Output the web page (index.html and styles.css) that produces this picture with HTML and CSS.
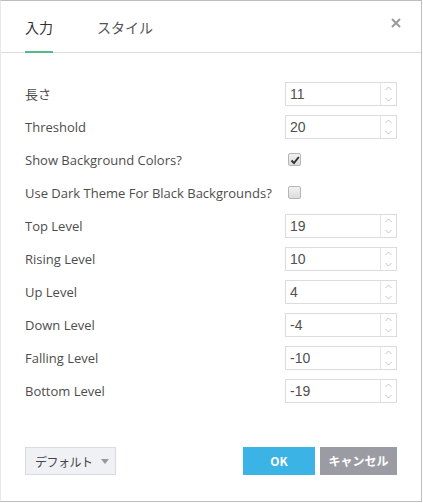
FILE: index.html
```html
<!DOCTYPE html>
<html lang="ja">
<head>
<meta charset="utf-8">
<link rel="stylesheet" href="styles.css">
</head>
<body>
<div class="dialog">
  <div class="header">
    <div class="tab active">入力</div>
    <div class="tab">スタイル</div>
    <div class="close">
      <svg width="10" height="10" viewBox="0 0 10 10"><path d="M1 1L9 9M9 1L1 9" stroke="#9a9a9a" stroke-width="2"/></svg>
    </div>
  </div>
  <div class="content">
    <div class="row"><span class="label">長さ</span><div class="spin"><span class="val">11</span><div class="arrows"><svg width="15" height="22" viewBox="0 0 15 22"><path d="M4.5 7L7.5 4L10.5 7" /><path d="M4.5 15L7.5 18L10.5 15" /></svg></div></div></div>
    <div class="row"><span class="label">Threshold</span><div class="spin"><span class="val">20</span><div class="arrows"><svg width="15" height="22" viewBox="0 0 15 22"><path d="M4.5 7L7.5 4L10.5 7" /><path d="M4.5 15L7.5 18L10.5 15" /></svg></div></div></div>
    <div class="row"><span class="label check-label">Show Background Colors?</span><span class="checkbox checked"><svg width="10" height="10" viewBox="0 0 10 10"><path d="M1.5 5.5L4 8L8.8 2" fill="none" stroke="#333" stroke-width="2"/></svg></span></div>
    <div class="row"><span class="label check-label">Use Dark Theme For Black Backgrounds?</span><span class="checkbox"></span></div>
    <div class="row"><span class="label">Top Level</span><div class="spin"><span class="val">19</span><div class="arrows"><svg width="15" height="22" viewBox="0 0 15 22"><path d="M4.5 7L7.5 4L10.5 7" /><path d="M4.5 15L7.5 18L10.5 15" /></svg></div></div></div>
    <div class="row"><span class="label">Rising Level</span><div class="spin"><span class="val">10</span><div class="arrows"><svg width="15" height="22" viewBox="0 0 15 22"><path d="M4.5 7L7.5 4L10.5 7" /><path d="M4.5 15L7.5 18L10.5 15" /></svg></div></div></div>
    <div class="row"><span class="label">Up Level</span><div class="spin"><span class="val">4</span><div class="arrows"><svg width="15" height="22" viewBox="0 0 15 22"><path d="M4.5 7L7.5 4L10.5 7" /><path d="M4.5 15L7.5 18L10.5 15" /></svg></div></div></div>
    <div class="row"><span class="label">Down Level</span><div class="spin"><span class="val">-4</span><div class="arrows"><svg width="15" height="22" viewBox="0 0 15 22"><path d="M4.5 7L7.5 4L10.5 7" /><path d="M4.5 15L7.5 18L10.5 15" /></svg></div></div></div>
    <div class="row"><span class="label">Falling Level</span><div class="spin"><span class="val">-10</span><div class="arrows"><svg width="15" height="22" viewBox="0 0 15 22"><path d="M4.5 7L7.5 4L10.5 7" /><path d="M4.5 15L7.5 18L10.5 15" /></svg></div></div></div>
    <div class="row"><span class="label">Bottom Level</span><div class="spin"><span class="val">-19</span><div class="arrows"><svg width="15" height="22" viewBox="0 0 15 22"><path d="M4.5 7L7.5 4L10.5 7" /><path d="M4.5 15L7.5 18L10.5 15" /></svg></div></div></div>
  </div>
  <div class="footer">
    <div class="btn-default">デフォルト<span class="caret"></span></div>
    <div class="spacer"></div>
    <div class="btn ok">OK</div>
    <div class="btn cancel">キャンセル</div>
  </div>
</div>
</body>
</html>
```

FILE: styles.css
```css
* { box-sizing: border-box; }
html, body { margin: 0; padding: 0; background: #fff; }
body {
  font-family: "Open Sans", "Noto Sans CJK JP", sans-serif;
  font-size: 13px;
  color: #4d4d4d;
}
.dialog {
  width: 422px;
  height: 502px;
  border: 1px solid #bdbdbd;
  border-left-color: #e8e8e8;
  display: flex;
  flex-direction: column;
}
.header {
  height: 53px;
  border-bottom: 1px solid #dcdcdc;
  display: flex;
  align-items: stretch;
  padding-left: 24px;
  padding-right: 20px;
}
.tab {
  font-family: "Noto Sans CJK JP", sans-serif;
  font-size: 14px;
  color: #555;
  display: flex;
  align-items: center;
  padding-top: 2px;
  margin-right: 44px;
  border-bottom: 2px solid transparent;
  margin-bottom: -1px;
}
.tab.active {
  color: #333;
  border-bottom-color: #53b987;
}
.close {
  margin-left: auto;
  display: flex;
  align-items: center;
  padding-bottom: 8px;
}
.content {
  padding: 24px 24px 0 24px;
  flex: 1;
}
.row {
  height: 33px;
  display: flex;
  align-items: center;
}
.label {
  width: 260px;
  flex: none;
  white-space: nowrap;
}
.check-label { width: 263px; }
.spin {
  width: 113px;
  height: 24px;
  border: 1px solid #dcdcdc;
  display: flex;
  margin-left: auto;
  background: #fff;
}
.val {
  flex: 1;
  font-family: "Liberation Sans", Arial, sans-serif;
  font-size: 14px;
  color: #505050;
  padding-left: 4px;
  display: flex;
  align-items: center;
}
.arrows {
  width: 16px;
  border-left: 1px solid #e4e4e4;
  display: flex;
}
.arrows svg path {
  fill: none;
  stroke: #c4c8cc;
  stroke-width: 1;
}
.checkbox {
  width: 13px;
  height: 13px;
  border: 1px solid #b5b5b5;
  border-radius: 2px;
  background: linear-gradient(#f2f2f2, #dcdcdc);
  display: flex;
  align-items: center;
  justify-content: center;
}
.footer {
  height: 95px;
  display: flex;
  align-items: flex-start;
  padding: 40px 24px 0 24px;
}
.btn-default {
  height: 28px;
  width: 91px;
  border: 1px solid #dadbe0;
  background: #f0f1f5;
  font-family: "Noto Sans CJK JP", sans-serif;
  font-size: 12px;
  color: #444;
  display: flex;
  align-items: center;
  padding-left: 9px;
  white-space: nowrap;
  letter-spacing: -0.5px;
}
.caret {
  width: 0; height: 0;
  border-left: 4px solid transparent;
  border-right: 4px solid transparent;
  border-top: 5px solid #999;
  margin-left: 8px;
}
.spacer { flex: 1; }
.btn {
  height: 28px;
  display: flex;
  align-items: center;
  justify-content: center;
  color: #fff;
  font-weight: bold;
  font-family: "Noto Sans CJK JP", sans-serif;
  font-size: 12px;
  padding-bottom: 2px;
}
.ok { width: 72px; background: #3bb3e4; margin-right: 5px; }
.cancel { width: 77px; background: #9b9ca3; }
```
